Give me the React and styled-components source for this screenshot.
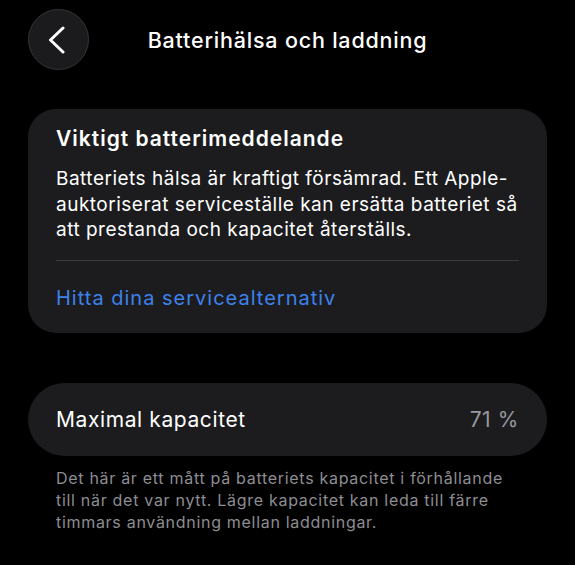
import React from "react";
import styled, { createGlobalStyle } from "styled-components";

const Global = createGlobalStyle`
  html, body { margin: 0; padding: 0; background: #000; }
  body {
    font-family: Inter, "Noto Sans", sans-serif;
    color: #fff;
    -webkit-font-smoothing: antialiased;
  }
`;

const Page = styled.div`
  width: 575px;
  height: 565px;
  background: #000;
  box-sizing: border-box;
  padding: 9px 28px 0 28px;
  display: flex;
  flex-direction: column;
`;

const NavBar = styled.header`
  position: relative;
  height: 61px;
  display: flex;
  align-items: center;
  justify-content: center;
`;

const BackButton = styled.button`
  position: absolute;
  left: 0;
  top: 0;
  width: 61px;
  height: 61px;
  border-radius: 50%;
  background: #1b1b1d;
  border: 1px solid #343437;
  box-sizing: border-box;
  display: flex;
  align-items: center;
  justify-content: center;
  padding: 0 4px 0 0;
  cursor: pointer;
`;

const Title = styled.h1`
  margin: 0;
  font-size: 21.5px;
  font-weight: 500;
  letter-spacing: 0.8px;
  color: #fff;
`;

const Card = styled.section`
  background: #1c1c1e;
  border-radius: ${(p) => p.$radius}px;
  margin-top: ${(p) => p.$top}px;
`;

const NoticeBody = styled.div`
  padding: 16px 28px 0 28px;
`;

const NoticeTitle = styled.h2`
  margin: 0;
  font-size: 21px;
  font-weight: 600;
  letter-spacing: 1px;
  line-height: 28px;
`;

const NoticeText = styled.p`
  margin: 13px 0 0 0;
  font-size: 19px;
  font-weight: 400;
  line-height: 25.5px;
  letter-spacing: 0.5px;
  color: #fff;
  white-space: nowrap;
`;

const Divider = styled.div`
  height: 1px;
  background: #3a3a3c;
  margin: 17px 0 0 0;
`;

const Link = styled.a`
  display: block;
  padding: 24.5px 0 21.5px 0;
  font-size: 20px;
  line-height: 26px;
  letter-spacing: 1px;
  color: #3c82ec;
  text-decoration: none;
`;

const Row = styled.div`
  height: 73px;
  padding: 0 28px;
  display: flex;
  align-items: center;
  justify-content: space-between;
  font-size: 21px;
  letter-spacing: 0.6px;
`;

const RowValue = styled.span`
  color: #98989e;
`;

const Footnote = styled.p`
  margin: 11px 28px 0 28px;
  font-size: 16px;
  line-height: 22px;
  color: #8d8d92;
  letter-spacing: 0.7px;
  white-space: nowrap;
`;

export default function App() {
  return (
    <>
      <Global />
      <Page>
        <NavBar>
          <BackButton aria-label="Tillbaka">
            <svg width="18" height="28" viewBox="0 0 18 28" fill="none">
              <path
                d="M15 2 L2.5 14 L15 26"
                stroke="#fff"
                strokeWidth="3"
                strokeLinecap="round"
                strokeLinejoin="round"
              />
            </svg>
          </BackButton>
          <Title>Batterihälsa och laddning</Title>
        </NavBar>
        <Card $radius={28} $top={39}>
          <NoticeBody>
            <NoticeTitle>Viktigt batterimeddelande</NoticeTitle>
            <NoticeText>
              Batteriets hälsa är kraftigt försämrad. Ett Apple-
              <br />
              auktoriserat serviceställe kan ersätta batteriet så
              <br />
              att prestanda och kapacitet återställs.
            </NoticeText>
            <Divider />
            <Link href="#">Hitta dina servicealternativ</Link>
          </NoticeBody>
        </Card>
        <Card $radius={37} $top={50}>
          <Row>
            <span>Maximal kapacitet</span>
            <RowValue>71 %</RowValue>
          </Row>
        </Card>
        <Footnote>
          Det här är ett mått på batteriets kapacitet i förhållande
          <br />
          till när det var nytt. Lägre kapacitet kan leda till färre
          <br />
          timmars användning mellan laddningar.
        </Footnote>
      </Page>
    </>
  );
}
